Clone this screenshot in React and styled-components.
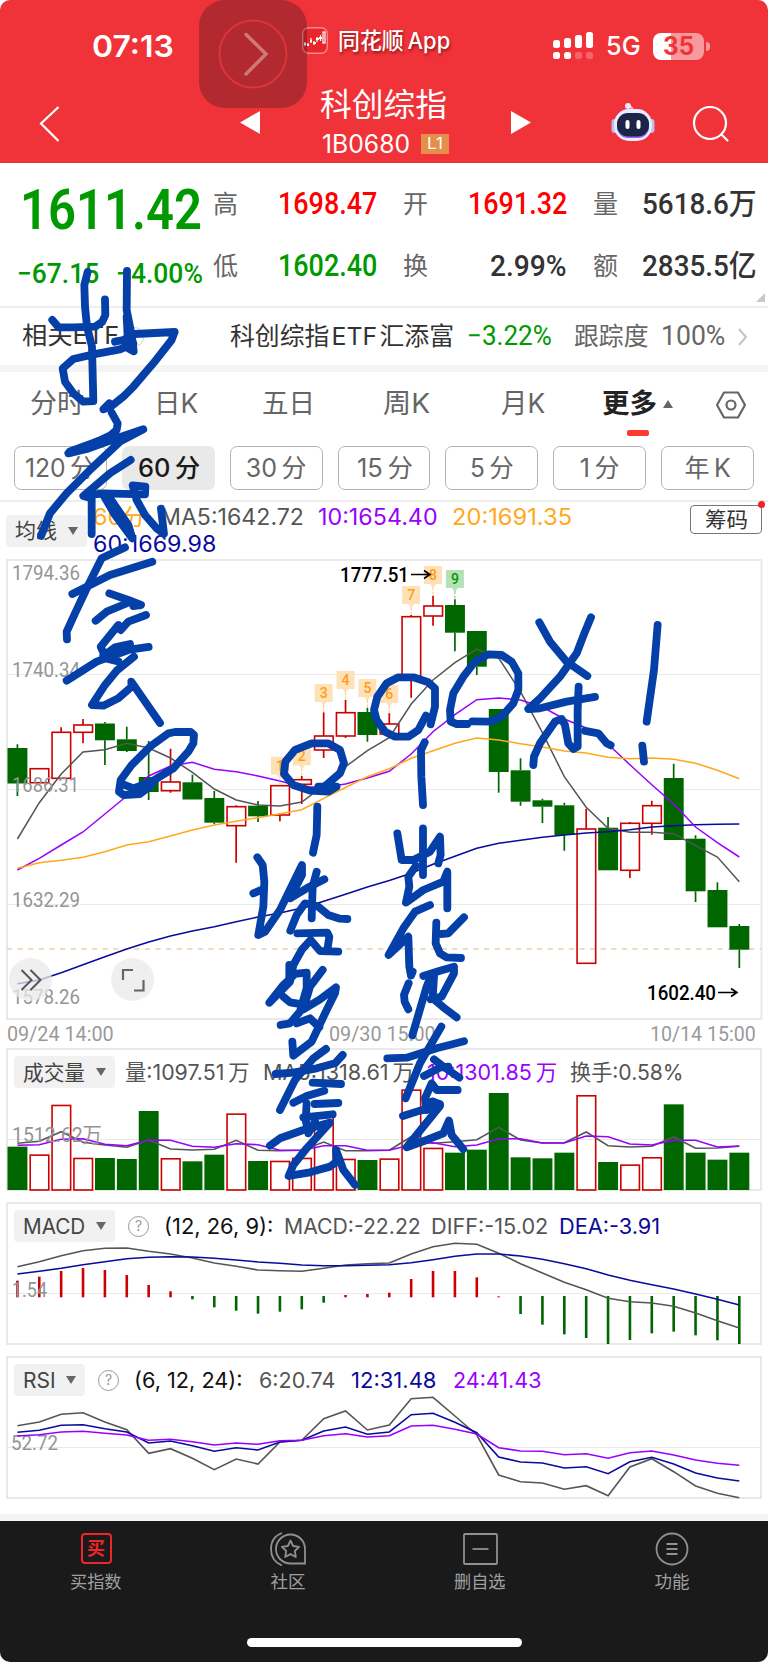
import { useLayoutEffect, useRef, useState } from "react";
import styled, { createGlobalStyle } from "styled-components";

const RED = "#f03239";
const UP = "#cc0000";
const DOWN = "#006600";
const GRAY = "#555";
const PURPLE = "#9900ff";
const ORANGE = "#ffa91a";
const NAVY = "#0a0a9c";
const FRAME = "#e9e9e9";

const GlobalStyle = createGlobalStyle`
  * {
    box-sizing: border-box;
  }
  body {
    margin: 0;
    background: #fff;
  }
`;

const Screen = styled.div`
  position: relative;
  display: flex;
  flex-direction: column;
  width: 768px;
  height: 1662px;
  overflow: hidden;
  background: #fff;
  color: #333;
  font-family: Inter, "Noto Sans CJK SC", sans-serif;
  line-height: 1;
  white-space: nowrap;
`;

/* text squeezed or stretched to a fixed advance width */
const FitBox = styled.span`
  display: inline-block;
  flex: none;
  font-family: ${(p) => (p.$din ? 'Roboto, "Noto Sans CJK SC"' : 'Inter, "Noto Sans CJK SC"')}, sans-serif;
  font-size: ${(p) => p.$size}px;
  font-weight: ${(p) => p.$weight || 400};
  color: ${(p) => p.$color || "inherit"};
  line-height: 1.2;
`;
const FitInner = styled.span`
  display: inline-block;
  transform-origin: 0 50%;
  white-space: pre;
`;
const Fit = ({ w, size, weight, color, din, children }) => {
  const ref = useRef(null);
  const [scale, setScale] = useState(1);
  useLayoutEffect(() => {
    setScale(w / ref.current.offsetWidth);
  }, [w]);
  return (
    <FitBox $size={size} $weight={weight} $color={color} $din={din} style={{ width: w }}>
      <FitInner ref={ref} style={{ transform: `scaleX(${scale})` }}>
        {children}
      </FitInner>
    </FitBox>
  );
};

const Header = styled.header`
  display: flex;
  flex-direction: column;
  height: 163px;
  flex: none;
  background: ${RED};
  border-radius: 10px 10px 0 0;
  color: #fff;
`;
const StatusBar = styled.div`
  display: flex;
  align-items: center;
  height: 86px;
  padding: 6px 64px 0 92px;
`;
const AppBadge = styled.div`
  display: flex;
  align-items: center;
  gap: 10px;
  margin: -12px auto 0 128px;
  text-shadow: 1px 2px 3px rgba(80, 0, 0, 0.6);
`;
const StatusRight = styled.div`
  display: flex;
  align-items: center;
  gap: 12px;
`;
const Battery = styled.div`
  position: relative;
  display: flex;
  align-items: center;
  justify-content: center;
  width: 51px;
  height: 27px;
  border-radius: 8px;
  background: linear-gradient(90deg, #fff 35%, #f8999c 35%);
  color: ${RED};
  &::after {
    content: "";
    position: absolute;
    right: -6px;
    top: 9px;
    width: 4px;
    height: 9px;
    border-radius: 0 4px 4px 0;
    background: #f8999c;
  }
`;
const TitleBar = styled.div`
  display: grid;
  grid-template-columns: 240px 80px 129px 62px 100px 44px 37px 1fr;
  height: 77px;
`;
const TitleCell = styled.div`
  display: flex;
  padding-left: ${(p) => p.$left || 0}px;
  padding-top: ${(p) => p.$top || 0}px;
`;
const TitleText = styled.div`
  display: flex;
  flex-direction: column;
`;
const CodeRow = styled.div`
  display: flex;
  align-items: center;
  gap: 11px;
  padding-left: 2px;
  margin-top: 5px;
`;
const Level = styled.span`
  display: flex;
  align-items: center;
  justify-content: center;
  width: 29px;
  height: 20px;
  background: #e58f4a;
`;
const AssistiveTouch = styled.div`
  position: absolute;
  left: 199px;
  top: 0;
  width: 108px;
  height: 108px;
  border-radius: 26px;
  background: rgba(10, 20, 22, 0.27);
`;

const Quote = styled.section`
  display: grid;
  grid-template-columns: 213px 1fr;
  flex: none;
  height: 145px;
  border-bottom: 2px solid #ededed;
  position: relative;
`;
const Price = styled.div`
  display: flex;
  flex-direction: column;
  padding: 14px 0 0 20px;
`;
const Change = styled.div`
  display: flex;
  gap: 17px;
  margin: 13px 0 0 -3px;
`;
const Stats = styled.div`
  display: grid;
  grid-template-columns: 190px 190px 164px;
  grid-auto-rows: 62px;
  padding-top: 10px;
`;
const Stat = styled.div`
  display: flex;
  align-items: center;
  justify-content: space-between;
  padding-right: ${(p) => (p.$last ? 0 : 26)}px;
`;
const Fold = styled.i`
  position: absolute;
  right: 3px;
  bottom: 4px;
  border-left: 9px solid transparent;
  border-bottom: 9px solid #c8c8c8;
`;

const EtfRow = styled.section`
  display: flex;
  align-items: center;
  flex: none;
  height: 57px;
  padding: 0 20px 0 22px;
`;
const Help = styled.span`
  display: inline-flex;
  align-items: center;
  justify-content: center;
  width: ${(p) => p.$d}px;
  height: ${(p) => p.$d}px;
  border: 1.5px solid ${(p) => p.$c};
  border-radius: 50%;
  color: ${(p) => p.$c};
  font-size: 14px;
`;
const Gap = styled.span`
  flex: none;
  width: ${(p) => p.$w}px;
`;
const Band = styled.div`
  flex: none;
  height: 7px;
  background: #f4f4f4;
`;

const Tabs = styled.nav`
  display: flex;
  align-items: center;
  flex: none;
  height: 65px;
  padding-left: 30px;
  color: #666;
`;
const MoreTab = styled.div`
  position: relative;
  display: flex;
  align-items: center;
  gap: 6px;
  &::after {
    content: "";
    position: absolute;
    left: 25px;
    top: 42px;
    width: 22px;
    height: 6px;
    border-radius: 2px;
    background: #fb3a30;
  }
`;
const Periods = styled.div`
  display: grid;
  grid-template-columns: repeat(7, 1fr);
  gap: 15px;
  flex: none;
  height: 65px;
  padding: 9px 14px 10px;
  border-bottom: 2px solid #ededed;
`;
const Period = styled.button`
  display: flex;
  align-items: center;
  justify-content: center;
  padding: 0;
  border: ${(p) => (p.$on ? "0" : "1.5px solid #b4b4b4")};
  border-radius: 7px;
  background: ${(p) => (p.$on ? "#e9e9e9" : "#fff")};
  color: ${(p) => (p.$on ? "#1a1a1a" : "#666")};
`;

const MaRow = styled.div`
  display: flex;
  flex: none;
  height: 57px;
  padding: 1px 6px 0;
`;
const Tag = styled.div`
  display: flex;
  align-items: center;
  justify-content: space-between;
  flex: none;
  width: ${(p) => p.$w}px;
  height: 32px;
  padding: 0 9px;
  border-radius: 4px;
  background: #f1f1f1;
  color: #444;
`;
const Caret = styled.i`
  border-left: 5.5px solid transparent;
  border-right: 5.5px solid transparent;
  border-top: ${(p) => (p.$up ? 0 : 8)}px solid #666;
  border-bottom: ${(p) => (p.$up ? 8 : 0)}px solid #666;
  ${(p) => (p.$up ? "border-top-color: transparent;" : "border-bottom-color: transparent;")}
`;
const MaTag = styled.div`
  padding-top: 12px;
`;
const MaValues = styled.div`
  display: flex;
  flex-direction: column;
  flex: 1;
  padding-left: 6px;
`;
const MaLine = styled.div`
  display: flex;
  align-items: center;
  gap: 14px;
  height: 27px;
`;
const Chips = styled.div`
  position: relative;
  display: flex;
  align-items: center;
  justify-content: center;
  width: 72px;
  height: 29px;
  margin-top: 2px;
  border: 1.5px solid #777;
  border-radius: 4px;
  &::after {
    content: "";
    position: absolute;
    right: -4px;
    top: -5px;
    width: 7px;
    height: 7px;
    border-radius: 50%;
    background: #f02030;
  }
`;

const ChartBox = styled.div`
  position: relative;
  flex: none;
  height: ${(p) => p.$h}px;
`;
const Svg = styled.svg`
  display: block;
  overflow: visible;
`;
const RoundButton = styled.button`
  position: absolute;
  left: ${(p) => p.$x}px;
  top: 399px;
  display: flex;
  align-items: center;
  justify-content: center;
  width: 43px;
  height: 43px;
  padding: 0;
  border: 0;
  border-radius: 50%;
  background: rgba(234, 234, 234, 0.75);
`;
const Dates = styled.div`
  display: flex;
  justify-content: space-between;
  align-items: center;
  flex: none;
  height: 28px;
  padding: 0 12px 0 7px;
`;
const Panel = styled.section`
  flex: none;
  width: 756px;
  height: ${(p) => p.$h}px;
  margin: 0 6px ${(p) => p.$mb}px;
  border: 2px solid ${FRAME};
`;
const PanelHead = styled.div`
  display: flex;
  align-items: center;
  height: 32px;
  margin: 6px 0 0 6px;
  ${FitBox} {
    margin-top: 2px;
  }
`;
const PanelBody = styled.div`
  height: 0;
  margin: 0 -8px;
`;

const TabBar = styled.nav`
  display: grid;
  grid-template-columns: repeat(4, 1fr);
  flex: 1;
  position: relative;
  background: #1a1a1a;
  border-radius: 0 0 10px 10px;
  color: #a0a0a0;
`;
const TabItem = styled.div`
  display: flex;
  flex-direction: column;
  align-items: center;
  gap: 5px;
  padding-top: 11px;
`;
const BuyIcon = styled.span`
  display: flex;
  align-items: center;
  justify-content: center;
  width: 31px;
  height: 31px;
  margin: 1px 0 2px;
  border: 2px solid #ee252b;
  border-radius: 4px;
  color: #ee252b;
  font-size: 18px;
  font-weight: 700;
`;
const HomeBar = styled.i`
  position: absolute;
  left: 247px;
  bottom: 15px;
  width: 275px;
  height: 9px;
  border-radius: 5px;
  background: #fff;
`;
const Ink = styled.svg`
  position: absolute;
  left: 0;
  top: 0;
  pointer-events: none;
`;

const px = (i) => 17.4 + i * 21.876;
const line = (ys) => ys.map((y, i) => `${px(i).toFixed(1)},${y}`).join(" ");
const panelLine = (base, ys) => line(ys.map((v) => (base + v / 3).toFixed(1)));

// [direction, high, body top, body bottom, low]
const candles = [
  ["d", 744.3, 748, 783.5, 796], ["u", 768.7, 768.7, 782.7, 782.7], ["u", 727.3, 732.3, 778.3, 779],
  ["u", 719, 725, 732.3, 743.3], ["d", 722, 723.5, 740.3, 765], ["d", 726.7, 739.3, 751, 752],
  ["d", 741, 777, 792, 800], ["u", 748.7, 782, 790.7, 792.7], ["d", 774.7, 782.3, 799.5, 799.5],
  ["d", 791, 798, 822.7, 824], ["u", 805.3, 806.7, 825.7, 862.7], ["d", 801, 805.7, 816.3, 822],
  ["u", 785.7, 785.7, 815, 821.3], ["u", 776, 779.7, 784.3, 804], ["u", 712.3, 736, 750, 758],
  ["u", 700, 712.7, 736, 738], ["d", 707.7, 712, 735, 741.7], ["u", 713, 724, 734, 734],
  ["u", 615, 616.7, 677, 697.7], ["u", 595.7, 606, 616, 625.7], ["d", 599.3, 605, 632.7, 651.3],
  ["d", 631, 631, 666.7, 675], ["d", 709, 709, 772, 792.7], ["d", 758.3, 770.3, 801.7, 805.7],
  ["d", 798.7, 800.3, 806.7, 823], ["d", 802.7, 805.3, 835, 850.7], ["u", 808.7, 829, 963.3, 963.3],
  ["d", 817, 827.7, 870.3, 870.3], ["u", 822, 823.3, 870.3, 878], ["u", 800.7, 805.7, 823.3, 834.7],
  ["d", 763.7, 778, 840, 840], ["d", 835.3, 838.7, 891.3, 902], ["d", 882.3, 890, 927.3, 927.3],
  ["d", 924, 926, 949.7, 968],
];
const ma5 = [839, 802.7, 774, 752, 749.7, 743.3, 748, 758, 772.3, 789, 800, 805, 806, 802, 785.7, 766.7, 750.7, 737.7, 704, 680, 662.7, 649, 658, 691.7, 732.7, 776.7, 807.3, 828.3, 832.3, 832.3, 833.7, 845.7, 857, 881.7];
const ma10 = [870, 858.3, 845, 832, 814, 796, 776, 766, 762.3, 769.3, 771.7, 776, 781, 786.7, 787.3, 784, 778, 771.3, 754, 731.7, 714.7, 699.7, 698, 700, 707, 719, 728, 744.3, 764.7, 784.7, 804, 827, 842.7, 857];
const ma20 = [868.3, 862.7, 860.3, 857.3, 851.7, 845, 841.7, 836, 830, 825, 821.3, 817.7, 813.7, 809.7, 798.3, 787.5, 776.7, 768.7, 758.3, 750.7, 743.3, 738, 740, 743.7, 747, 751, 753, 757.3, 758.7, 758, 759.3, 763.3, 770.3, 778.7];
const ma60 = [983.7, 980, 972.7, 964.7, 956.7, 949, 942, 936, 931, 926.7, 921.7, 917, 913, 908, 901.3, 894.3, 887, 880.5, 873.3, 864.3, 856.3, 848.3, 843.3, 840.3, 837.3, 835, 833, 831.7, 829.7, 827, 825.7, 824.7, 824.3, 824];

// [count, candle index, box top]
const signals = [
  [1, 12, 756.7], [2, 13, 747.3], [3, 14, 684], [4, 15, 671], [5, 16, 679],
  [6, 17, 685], [7, 18, 586], [8, 19, 566], [9, 20, 570],
];

const volumes = [320, 343, 194, 353, 354, 357, 213, 354, 364, 344, 220, 363, 362, 353, 225, 356, 360, 355, 148, 323, 338, 329, 159, 352, 355, 338, 165, 366, 373, 351, 193, 338, 359, 338];
const vol5 = [310, 304, 275, 307, 315, 322, 300, 327, 330, 328, 301, 331, 332, 331, 306, 332, 332, 331, 290, 310, 305, 299, 262, 300, 309, 308, 276, 317, 321, 319, 291, 325, 324, 319];
const vol10 = [316, 314, 298, 296, 313, 317, 300, 301, 319, 322, 311, 314, 331, 331, 317, 317, 331, 331, 314, 308, 320, 315, 296, 296, 309, 309, 288, 290, 312, 315, 301, 301, 321, 318];

const macdBars = [722, 710, 693, 684, 690, 705, 735, 754, 778, 802, 812, 821, 815, 808, 788, 765, 762, 758, 717, 693, 693, 712, 769, 822, 854, 883, 894, 912, 900, 880, 875, 886, 901, 912];
const diff = [680, 665, 647, 632, 625, 624, 634, 642, 654, 669, 679, 690, 692, 694, 685, 675, 671, 669, 642, 620, 610, 613, 640, 671, 699, 727, 749, 775, 785, 789, 799, 819, 842, 864];
const dea = [702, 694, 685, 674, 665, 656, 652, 650, 651, 655, 660, 666, 670, 675, 677, 677, 676, 674, 668, 659, 649, 642, 642, 648, 658, 671, 686, 705, 721, 734, 747, 762, 778, 795];

const rsi6 = [227, 216, 193, 188, 216, 239, 310, 296, 325, 359, 327, 342, 276, 271, 206, 183, 240, 225, 146, 142, 198, 255, 375, 395, 399, 418, 407, 437, 351, 326, 365, 408, 430, 443];
const rsi12 = [247, 241, 226, 224, 236, 246, 279, 273, 287, 304, 293, 300, 276, 271, 243, 231, 253, 246, 194, 190, 217, 248, 321, 336, 339, 354, 350, 371, 335, 322, 342, 369, 384, 393];
const rsi24 = [258, 254, 246, 244, 250, 255, 271, 268, 275, 285, 279, 283, 272, 271, 257, 251, 261, 257, 228, 226, 238, 252, 293, 303, 304, 314, 311, 325, 308, 303, 315, 330, 340, 346];

// freehand strokes, each group with its own origin at triple resolution
const ink = [
  [20, 260, [
    "203,36 193,75 195,140 201,200 216,260 220,423 190,425 160,400 135,365 128,325 160,297 220,283 300,268 340,250",
    "97,180 116,202 160,202 225,200 247,185 256,165 255,118",
    "321,33 320,150 335,225 341,274 325,265 320,170",
    "285,245 310,240 345,222 464,216 455,240 400,310 340,380 310,410 275,438 250,448 268,430",
    "275,458 293,490 290,510 270,527 210,555 145,580 200,567 275,540 370,508 300,545 215,625 140,700 90,760 63,828",
    "150,574 230,545 290,530 200,566",
    "332,600 270,640 190,708 215,715 215,822",
    "200,706 250,700 375,703 376,680 338,676 350,720 375,765 410,805 432,822 423,746",
    "250,705 285,765 337,835 325,795 270,715 315,805",
  ]],
  [0, 550, [
    "375,-8 305,25 265,105 225,190 200,245 201,268",
    "217,132 330,75 457,35",
    "328,130 385,150 423,165 400,168",
    "287,212 320,185 390,156",
    "438,195 385,215 362,240 355,225 302,290 318,325 355,334",
    "200,392 290,335 385,300 446,291",
    "310,318 345,292 390,282 350,304",
    "402,320 350,362 315,405 276,465 310,467 355,445 395,410 394,395 480,519",
    "370,703 400,715 455,705 420,732 370,735 357,725 362,690 395,645 450,590 505,550 525,546 572,546 582,555 580,580 565,605 520,655 455,695 400,715",
    "955,710 1010,710 985,725 930,722 880,705 852,672 856,635 885,600 935,580 985,580 1020,600 1032,640 1020,670 985,700 965,715",
  ]],
  [380, 550, [
    "152,523 165,470 165,415 145,397 100,382 55,382 20,400 -8,440 -18,480 -10,510 15,545 45,560 85,560 115,540 138,497",
    "277,514 330,515 365,500 400,460 415,420 415,370 395,335 365,315 325,313 285,335 250,380 220,430 210,480 212,515 230,522 262,522",
    "478,217 510,275 560,335 622,378",
    "633,202 615,245 590,310 540,380 480,445 445,477 480,475 560,455 645,441",
    "596,410 593,480 593,590 580,597 565,580 555,525 545,507 525,515 480,580 462,620 460,645",
    "615,543 655,550 680,580 692,586",
    "833,225 822,360 800,515",
    "787,587 792,635",
    "134,577 123,600 124,680 129,765",
  ]],
  [240, 800, [
    "232,20 230,105 219,158",
    "52,172 68,195 73,245 70,320 55,405 75,395 120,330 186,195 186,225 150,295 200,265 253,238",
    "40,280 68,268",
    "230,215 218,260 215,355",
    "151,392 170,345 195,310 235,320 265,345 300,356 322,357",
    "172,400 262,398 268,410 262,450",
    "295,455 240,453 212,420 185,450 160,495 150,545 88,608 130,555 165,522 200,518 200,565 180,635 150,670 122,675",
    "148,495 148,540",
    "130,590 150,607 178,612",
    "248,510 210,560 190,628 240,598 288,562 285,580 260,630 215,725 160,767 157,725",
    "170,670 210,655 238,682",
    "258,747 220,775 165,840 120,930",
    "107,822 160,818 230,805 285,790 308,765",
    "218,848 303,852",
    "160,908 200,888 253,872",
    "224,912 295,909",
    "200,910 197,960 205,1000 225,965",
    "190,952 278,943",
    "90,1037 120,1015 190,990 270,968 200,1045 160,1095 146,1128 210,1117 270,1100 290,1085 288,1050 310,1110 345,1155",
    "472,100 485,180 520,180 570,155 600,110 602,165 595,190",
    "549,85 549,225",
    "528,197 505,230 508,260 498,308 550,270 610,245 622,215 622,325",
    "570,315 525,335 490,385 446,465 505,410 508,500 513,527 518,515",
    "589,368 587,430 600,460 620,472 663,474",
    "672,352 625,400 603,402",
    "506,550 492,585 494,605 505,628",
    "550,528 600,512 642,500 642,520 605,590 572,598",
    "575,522 560,560 517,706",
    "582,530 578,595 610,622 650,652",
    "604,680 540,790 497,895",
    "442,775 500,773 590,745 672,724",
    "582,778 610,800 658,833",
    "552,828 600,803 625,800",
    "653,870 590,870 575,850 555,895 560,930",
    "489,948 540,932 575,925 600,912 575,905",
    "580,905 600,918 500,1042 560,1020 610,1000 627,962 635,1005 670,1048",
  ]],
];

const AxisText = ({ x, y, w, children, color = "#949494", weight = 400, size = 21 }) => (
  <text x={x} y={y} textLength={w} lengthAdjust="spacingAndGlyphs" fill={color} fontFamily='Roboto, "Noto Sans CJK SC"' fontSize={size} fontWeight={weight}>
    {children}
  </text>
);

const Bar = ({ i, top, bottom, up }) =>
  up ? (
    <rect x={px(i) - 9.1} y={top} width={18.6} height={Math.max(bottom - top, 1)} fill="none" stroke={UP} strokeWidth="1.6" />
  ) : (
    <rect x={px(i) - 9.9} y={top} width={19.9} height={bottom - top} fill={DOWN} />
  );

const MainChart = () => (
  <Svg width="768" height="461" viewBox="0 559 768 461">
    <g fill="none" stroke={FRAME} strokeWidth="2">
      <rect x="7" y="560" width="754.5" height="459" />
      <path d="M7 674.5H761M7 789.5H761M7 904.5H761" strokeWidth="1.2" />
    </g>
    <path d="M7 949H761" stroke="#ead0ac" strokeWidth="1.6" strokeDasharray="5.3 5.3" />
    {candles.map(([dir, high, top, bottom, low], i) => (
      <g key={i}>
        <path d={`M${px(i)} ${high}V${top}M${px(i)} ${bottom}V${low}`} stroke={dir === "u" ? UP : DOWN} strokeWidth="1.7" />
        <Bar i={i} top={top} bottom={bottom} up={dir === "u"} />
      </g>
    ))}
    <g fill="none" strokeWidth="1.5">
      <polyline points={line(ma5)} stroke={GRAY} />
      <polyline points={line(ma60)} stroke={NAVY} />
      <polyline points={line(ma10)} stroke={PURPLE} />
      <polyline points={line(ma20)} stroke={ORANGE} />
    </g>
    {signals.map(([n, i, y]) => (
      <g key={n}>
        <path d={`M${px(i) - 9} ${y}h18v18h-6l-3 4l-3 -4h-6z`} fill={n === 9 ? "#b5e1b5" : "#ffe1b8"} />
        <path d={`M${px(i)} ${y + 21}v9`} stroke={n === 9 ? "#80c080" : "#ffc878"} strokeDasharray="3 1.5" />
        <text x={px(i)} y={y + 14} textAnchor="middle" fontFamily="Roboto" fontSize="14" fontWeight="500" fill={n === 9 ? "#00990a" : "#ff9c1a"}>
          {n}
        </text>
      </g>
    ))}
    <AxisText x={12} y={580} w={68}>1794.36</AxisText>
    <AxisText x={12} y={677} w={68}>1740.34</AxisText>
    <AxisText x={12} y={792} w={67}>1686.31</AxisText>
    <AxisText x={12} y={907} w={68}>1632.29</AxisText>
    <AxisText x={12} y={1004} w={68}>1578.26</AxisText>
    <AxisText x={340} y={582} w={69} color="#000" weight={500}>1777.51</AxisText>
    <AxisText x={647} y={1000} w={69} color="#000" weight={500}>1602.40</AxisText>
    <path d="M411 574.5h19m-6 -4l6 4l-6 4M718 992.5h19m-6 -4l6 4l-6 4" fill="none" stroke="#000" strokeWidth="1.6" />
  </Svg>
);

const Search = () => (
  <svg width="38" height="38" viewBox="0 0 38 38" fill="none" stroke="#fff" strokeWidth="2.2">
    <circle cx="18" cy="18" r="16" />
    <path d="M29.5 29.5l6 6" strokeLinecap="round" />
  </svg>
);
const Robot = () => (
  <svg width="44" height="40" viewBox="0 0 44 40">
    <path d="M22 12q1 -7 -5 -8" fill="none" stroke="#f4b8cb" strokeWidth="2" />
    <circle cx="17" cy="4" r="3" fill="#e9e9fb" />
    <rect x="0.5" y="17" width="6" height="14" rx="3" fill="#b9bdf0" />
    <rect x="37.5" y="17" width="6" height="14" rx="3" fill="#b9bdf0" />
    <rect x="3" y="7" width="38" height="32" rx="15" fill="#e9ebff" />
    <rect x="6" y="12" width="32" height="24" rx="11" fill="#9b62ee" />
    <rect x="6" y="11" width="32" height="23.5" rx="11" fill="#1c2548" />
    <rect x="14.5" y="18" width="4" height="9" rx="2" fill="#fff" />
    <rect x="25.5" y="18" width="4" height="9" rx="2" fill="#fff" />
  </svg>
);
const Signal = () => (
  <svg width="41" height="28" viewBox="0 0 41 28" fill="#fff">
    <rect x="0" y="8" width="7" height="8" rx="2.5" />
    <rect x="11" y="6" width="7" height="10" rx="2.5" />
    <rect x="22" y="3" width="7" height="13" rx="2.5" />
    <rect x="33" y="0" width="7" height="16" rx="2.5" />
    <rect x="0" y="20" width="7" height="7" rx="2.5" />
    <rect x="11" y="20" width="7" height="7" rx="2.5" />
    <rect x="22" y="20" width="7" height="7" rx="2.5" opacity="0.25" />
    <rect x="33" y="20" width="7" height="7" rx="2.5" opacity="0.25" />
  </svg>
);
const AppIcon = () => (
  <svg width="26" height="27" viewBox="0 0 26 27">
    <rect x="0.7" y="0.7" width="24.6" height="25.6" rx="6" fill="#e8262c" stroke="#f58a8c" strokeWidth="1.4" />
    <g fill="none" stroke="#fff" strokeWidth="1.2">
      <path d="M3 15v4M6 16v3M9 11v5M12 14v4M15 10v5M18.5 8v6" />
      <rect x="21" y="5" width="2" height="11" />
      <path d="M2 17h2M5 18h2M8 14h2M11 16h3M14 12h3M17 11h3" strokeWidth="2" />
    </g>
  </svg>
);

// [label, text width, distance to the next tab]
const tabs = [["分时", 54, 70], ["日K", 44, 64], ["五日", 53, 68], ["周K", 47, 71], ["月K", 44, 57]];
const periods = [["120分", 70], ["60分", 62], ["30分", 61], ["15分", 56], ["5分", 44], ["1分", 40], ["年K", 46]];

export default function App() {
  return (
    <Screen>
      <GlobalStyle />
      <Header>
        <StatusBar>
          <Fit w={82} size={30} weight={600}>07:13</Fit>
          <AppBadge>
            <AppIcon />
            <Fit w={112} size={22.5} weight={500}>同花顺{"\u2009"}App</Fit>
          </AppBadge>
          <StatusRight>
            <Signal />
            <Fit w={35} size={26} weight={500}>5G</Fit>
            <Battery><Fit w={31} size={25} weight={700}>35</Fit></Battery>
          </StatusRight>
        </StatusBar>
        <TitleBar>
          <TitleCell $left={39} $top={20}>
            <svg width="21" height="36" viewBox="0 0 21 36" fill="none" stroke="#fff" strokeWidth="2.2"><path d="M19.5 1L2 17.5L19.5 35" /></svg>
          </TitleCell>
          <TitleCell $top={25}>
            <svg width="20" height="24" viewBox="0 0 20 24"><path d="M20 0V23L0 11.5z" fill="#fff" /></svg>
          </TitleCell>
          <TitleText>
            <Fit w={127} size={31.5}>科创综指</Fit>
            <CodeRow>
              <Fit w={88} size={25}>1B0680</Fit>
              <Level><Fit w={16} size={16}>L1</Fit></Level>
            </CodeRow>
          </TitleText>
          <TitleCell />
          <TitleCell $top={25}>
            <svg width="20" height="24" viewBox="0 0 20 24"><path d="M0 0V23L20 11.5z" fill="#fff" /></svg>
          </TitleCell>
          <TitleCell $top={16}><Robot /></TitleCell>
          <TitleCell />
          <TitleCell $top={19}><Search /></TitleCell>
        </TitleBar>
      </Header>
      <AssistiveTouch>
        <svg width="108" height="108" viewBox="0 0 108 108" fill="none">
          <circle cx="54" cy="54" r="33.5" stroke="#dc343b" strokeWidth="2" />
          <path d="M47 34.5L67 54L47 74" stroke="#d07779" strokeWidth="3.5" strokeLinecap="round" />
        </svg>
      </AssistiveTouch>

      <Quote>
        <Price>
          <Fit w={182} size={56} weight={600} color="#009900" din>1611.42</Fit>
          <Change>
            <Fit w={82} size={28} weight={500} color="#009900" din>−67.15</Fit>
            <Fit w={87} size={28} weight={500} color="#009900" din>−4.00%</Fit>
          </Change>
        </Price>
        <Stats>
          <Stat><Fit w={25} size={25} color="#666">高</Fit><Fit w={99} size={31} weight={500} color="#ff0000" din>1698.47</Fit></Stat>
          <Stat><Fit w={25} size={25} color="#666">开</Fit><Fit w={99} size={31} weight={500} color="#ff0000" din>1691.32</Fit></Stat>
          <Stat $last><Fit w={25} size={25} color="#666">量</Fit><Fit w={115} size={30} weight={500} din>5618.6万</Fit></Stat>
          <Stat><Fit w={25} size={25} color="#666">低</Fit><Fit w={99} size={31} weight={500} color="#009900" din>1602.40</Fit></Stat>
          <Stat><Fit w={25} size={25} color="#666">换</Fit><Fit w={77} size={30} weight={500} din>2.99%</Fit></Stat>
          <Stat $last><Fit w={25} size={25} color="#666">额</Fit><Fit w={115} size={30} weight={500} din>2835.5亿</Fit></Stat>
        </Stats>
        <Fold />
      </Quote>

      <EtfRow>
        <Fit w={97} size={24}>相关ETF</Fit>
        <Gap $w={5} />
        <Help $d={20} $c="#ccc">?</Help>
        <Gap $w={86} />
        <Fit w={224} size={24.5}>科创综指{"\u200a"}ETF{"\u200a"}汇添富</Fit>
        <Gap $w={13} />
        <Fit w={85} size={27} color="#009900" din>−3.22%</Fit>
        <Gap $w={22} />
        <Fit w={75} size={24.5} color="#666">跟踪度</Fit>
        <Gap $w={12} />
        <Fit w={64} size={27} color="#666" din>100%</Fit>
        <Gap $w={13} />
        <svg width="10" height="18" viewBox="0 0 10 18" fill="none" stroke="#c4c4c4" strokeWidth="2"><path d="M1 1L8 9L1 17" /></svg>
      </EtfRow>
      <Band />

      <Tabs>
        {tabs.map(([label, w, gap]) => [
          <Fit key={label} w={w} size={27}>{label}</Fit>,
          <Gap key={`${label}-gap`} $w={gap} />,
        ])}
        <MoreTab>
          <Fit w={55} size={27} weight={700} color="#222">更多</Fit>
          <Caret $up />
        </MoreTab>
        <Gap $w={43} />
        <svg width="30" height="28" viewBox="0 0 30 28" fill="none" stroke="#666" strokeWidth="2.2" strokeLinejoin="round">
          <path d="M8 1.5H22L29 14L22 26.5H8L1 14z" />
          <circle cx="15" cy="14" r="4.5" />
        </svg>
      </Tabs>
      <Periods>
        {periods.map(([label, w]) => (
          <Period key={label} $on={label === "60分"}>
            <Fit w={w} size={25} weight={label === "60分" ? 500 : 400}>{label.replace(/([分K])/, "\u2009$1")}</Fit>
          </Period>
        ))}
      </Periods>

      <MaRow>
        <MaTag><Tag $w={81}><Fit w={42} size={21}>均线</Fit><Caret /></Tag></MaTag>
        <MaValues>
          <MaLine>
            <Fit w={53} size={22.5} color={ORANGE}>60分</Fit>
            <Fit w={144} size={22.5} color={GRAY}>MA5:1642.72</Fit>
            <Fit w={120} size={22.5} color={PURPLE}>10:1654.40</Fit>
            <Fit w={120} size={22.5} color={ORANGE}>20:1691.35</Fit>
          </MaLine>
          <MaLine><Fit w={123} size={22.5} color={NAVY}>60:1669.98</Fit></MaLine>
        </MaValues>
        <Chips><Fit w={43} size={21}>筹码</Fit></Chips>
      </MaRow>

      <ChartBox $h={461}>
        <MainChart />
        <RoundButton $x={9}>
          <svg width="22" height="22" viewBox="0 0 22 22" fill="none" stroke="#555" strokeWidth="2"><path d="M1.5 1L11.5 11L1.5 21M10.5 1L20.5 11L10.5 21" /></svg>
        </RoundButton>
        <RoundButton $x={111}>
          <svg width="24" height="24" viewBox="0 0 24 24" fill="none" stroke="#666" strokeWidth="2.2"><path d="M2 12V2H12M22.5 12V22.5H13" /></svg>
        </RoundButton>
      </ChartBox>
      <Dates>
        <Fit w={107} size={20.5} color="#999" din>09/24 14:00</Fit>
        <Fit w={107} size={20.5} color="#999" din>09/30 15:00</Fit>
        <Fit w={106} size={20.5} color="#999" din>10/14 15:00</Fit>
      </Dates>

      <Panel $h={143} $mb={11}>
        <PanelHead>
          <Tag $w={101}><Fit w={62} size={21}>成交量</Fit><Caret /></Tag>
          <Gap $w={10} />
          <Fit w={125} size={21.5} color={GRAY}>量:1097.51{"\u2009"}万</Fit>
          <Gap $w={13} />
          <Fit w={151} size={21.5} color={GRAY}>MA5:1318.61{"\u2009"}万</Fit>
          <Gap $w={13} />
          <Fit w={130} size={21.5} color={PURPLE}>10:1301.85{"\u2009"}万</Fit>
          <Gap $w={13} />
          <Fit w={114} size={21.5} color={GRAY}>换手:0.58%</Fit>
        </PanelHead>
        <PanelBody>
          <Svg width="768" height="102" viewBox="0 1088 768 102">
            <path d="M7 1139.5H761" stroke={FRAME} strokeWidth="1.2" />
            {volumes.map((v, i) => (
              <Bar key={i} i={i} top={1040 + v / 3 + (candles[i][0] === "u" ? 0.8 : 0)} bottom={1190} up={candles[i][0] === "u"} />
            ))}
            <g fill="none" strokeWidth="1.6">
              <polyline points={panelLine(1040, vol5)} stroke={GRAY} />
              <polyline points={panelLine(1040, vol10)} stroke={PURPLE} />
            </g>
            <AxisText x={12} y={1142} w={90}>1512.62万</AxisText>
          </Svg>
        </PanelBody>
      </Panel>

      <Panel $h={143} $mb={11}>
        <PanelHead>
          <Tag $w={101}><Fit w={62} size={21}>MACD</Fit><Caret /></Tag>
          <Gap $w={13} />
          <Help $d={21} $c="#999">?</Help>
          <Gap $w={15} />
          <Fit w={109} size={21.5} color="#111">(12, 26, 9):</Fit>
          <Gap $w={11} />
          <Fit w={137} size={21.5} color={GRAY}>MACD:-22.22</Fit>
          <Gap $w={10} />
          <Fit w={117} size={21.5} color={GRAY}>DIFF:-15.02</Fit>
          <Gap $w={11} />
          <Fit w={101} size={21.5} color={NAVY}>DEA:-3.91</Fit>
        </PanelHead>
        <PanelBody>
          <Svg width="768" height="102" viewBox="0 1242 768 102">
            <path d="M7 1293.5H761" stroke={FRAME} strokeWidth="1.2" />
            {macdBars.map((v, i) => {
              const up = v < 770;
              return <path key={i} d={`M${px(i)} ${up ? 1297.3 : 1296}V${1040 + v / 3}`} stroke={up ? UP : DOWN} strokeWidth="2.6" />;
            })}
            <g fill="none" strokeWidth="1.6">
              <polyline points={panelLine(1040, diff)} stroke={GRAY} />
              <polyline points={panelLine(1040, dea)} stroke={NAVY} />
            </g>
            <AxisText x={12} y={1296.5} w={35}>1.54</AxisText>
          </Svg>
        </PanelBody>
      </Panel>

      <Panel $h={143} $mb={15}>
        <PanelHead>
          <Tag $w={71}><Fit w={33} size={21}>RSI</Fit><Caret /></Tag>
          <Gap $w={13} />
          <Help $d={21} $c="#999">?</Help>
          <Gap $w={15} />
          <Fit w={109} size={21.5} color="#111">(6, 12, 24):</Fit>
          <Gap $w={16} />
          <Fit w={76} size={21.5} color={GRAY}>6:20.74</Fit>
          <Gap $w={16} />
          <Fit w={85} size={21.5} color={NAVY}>12:31.48</Fit>
          <Gap $w={17} />
          <Fit w={88} size={21.5} color={PURPLE}>24:41.43</Fit>
        </PanelHead>
        <PanelBody>
          <Svg width="768" height="102" viewBox="0 1396 768 102">
            <path d="M7 1447.5H761" stroke={FRAME} strokeWidth="1.2" />
            <AxisText x={11} y={1450} w={47}>52.72</AxisText>
            <g fill="none" strokeWidth="1.6">
              <polyline points={panelLine(1350, rsi6)} stroke={GRAY} />
              <polyline points={panelLine(1350, rsi12)} stroke={NAVY} />
              <polyline points={panelLine(1350, rsi24)} stroke={PURPLE} />
            </g>
          </Svg>
        </PanelBody>
      </Panel>
      <Band />

      <TabBar>
        <TabItem>
          <BuyIcon>买</BuyIcon>
          <Fit w={52} size={17.5}>买指数</Fit>
        </TabItem>
        <TabItem>
          <svg width="36" height="34" viewBox="0 0 36 34" fill="none" stroke="#909090" strokeWidth="1.8">
            <path d="M20.5 2.5a14.5 14.5 0 1 0 0 29H35V17A14.5 14.5 0 0 0 20.5 2.5z" />
            <path d="M12 1Q1 5 1 17Q1 29 12 33.5" />
            <path d="M20.5 8.5l2.6 5.5 6 .8-4.3 4.2 1 6-5.3-2.9-5.3 2.9 1-6-4.3-4.2 6-.8z" strokeLinejoin="round" />
          </svg>
          <Fit w={35} size={17.5}>社区</Fit>
        </TabItem>
        <TabItem>
          <svg width="35" height="34" viewBox="0 0 35 34" fill="none" stroke="#909090" strokeWidth="1.8">
            <rect x="1" y="2" width="33" height="30" rx="1" />
            <path d="M9.5 17H25.5" />
          </svg>
          <Fit w={52} size={17.5}>删自选</Fit>
        </TabItem>
        <TabItem>
          <svg width="34" height="34" viewBox="0 0 34 34" fill="none" stroke="#909090" strokeWidth="1.8">
            <circle cx="17" cy="17" r="15.5" />
            <path d="M11.5 12H22.5M11.5 17H22.5M11.5 22H22.5" />
          </svg>
          <Fit w={35} size={17.5}>功能</Fit>
        </TabItem>
        <HomeBar />
      </TabBar>

      <Ink width="768" height="1662" viewBox="0 0 768 1662" fill="none" stroke="#0440a8" strokeLinecap="round" strokeLinejoin="round">
        {ink.map(([x, y, strokes]) => (
          <g key={`${x}-${y}`} transform={`translate(${x} ${y}) scale(0.3333)`} strokeWidth="23.5">
            {strokes.map((points) => (
              <polyline key={points} points={points} />
            ))}
          </g>
        ))}
      </Ink>
    </Screen>
  );
}
